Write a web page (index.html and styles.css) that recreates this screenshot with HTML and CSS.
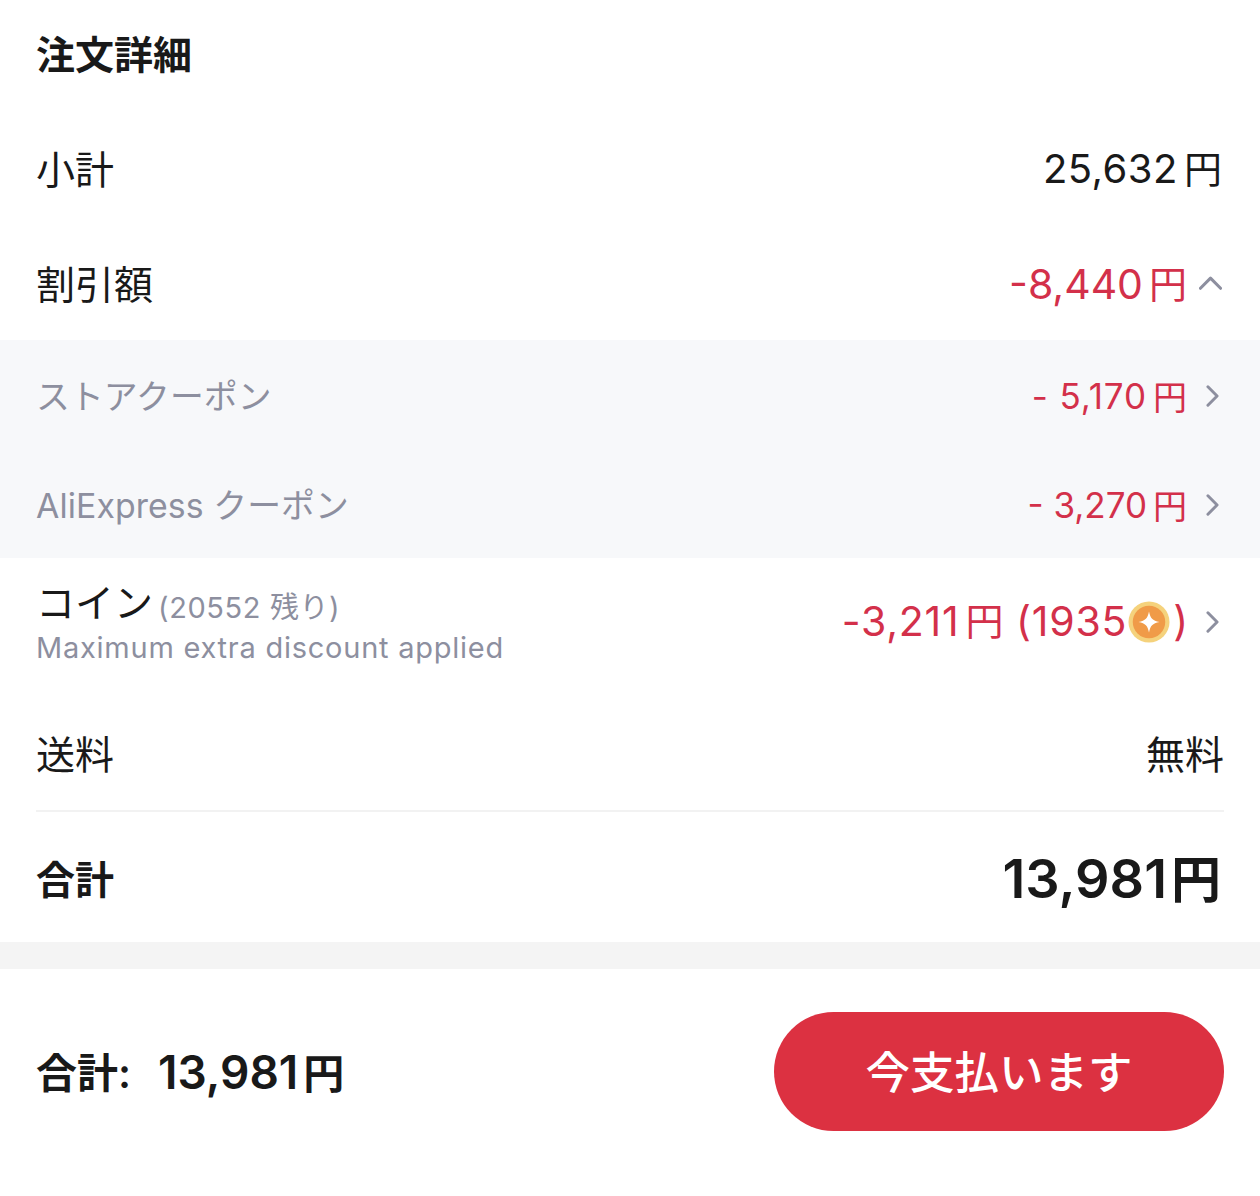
FILE: index.html
```html
<!DOCTYPE html>
<html lang="ja">
<head>
<meta charset="utf-8">
<title>注文詳細</title>
<link rel="stylesheet" href="styles.css">
</head>
<body>
<main class="page">
  <section class="details">
    <h1 class="title">注文詳細</h1>
    <div class="row row-sub"><span>小計</span><span class="amount">25,632<span class="yen">円</span></span></div>
    <div class="row row-disc"><span>割引額</span><span class="end red">-8,440<span class="yen">円</span>
      <svg class="chev up" viewBox="0 0 24 14"><path d="M1.500 12.500 12 2l10.500 10.500"/></svg></span></div>
    <div class="panel">
      <div class="prow"><span>ストアクーポン</span><span class="end pamount pamount-wide">- 5,170<span class="yen">円</span>
        <svg class="chev" viewBox="0 0 14 24"><path d="M2 2l10 10L2 22"/></svg></span></div>
      <div class="prow"><span>AliExpress クーポン</span><span class="end pamount">- 3,270<span class="yen">円</span>
        <svg class="chev" viewBox="0 0 14 24"><path d="M2 2l10 10L2 22"/></svg></span></div>
    </div>
    <div class="row row-coin">
      <div class="coin-left">
        <div class="coin-name">コイン<span class="coin-count">(20552 残り)</span></div>
        <div class="coin-note">Maximum extra discount applied</div>
      </div>
      <span class="end red coin-amount">-3,211<span class="yen">円</span>&nbsp;(1935<svg class="coin" viewBox="0 0 44 44"><circle cx="22" cy="22" r="21.500" fill="#f5d27c"/><circle cx="22" cy="22" r="17" fill="#f09b48"/><path d="M22 11c1.400 7 3.600 9.600 11 11-7.400 1.400-9.600 4-11 11-1.400-7-3.600-9.600-11-11 7.400-1.400 9.600-4 11-11z" fill="#fff"/></svg>)
        <svg class="chev" viewBox="0 0 14 24"><path d="M2 2l10 10L2 22"/></svg></span>
    </div>
    <div class="row row-ship"><span>送料</span><span>無料</span></div>
    <div class="row row-total"><span class="total-label">合計</span><span class="total-value">13,981<span class="yen">円</span></span></div>
  </section>
  <div class="gap"></div>
  <footer class="footer">
    <div class="foot-total"><span class="foot-label">合計:</span><span class="foot-value">13,981<span class="yen">円</span></span></div>
    <button class="pay" type="button">今支払います</button>
  </footer>
</main>
</body>
</html>
```
FILE: styles.css
```css
* { box-sizing: border-box; }
html, body { margin: 0; padding: 0; background: #fff; }
body {
  font-family: Inter, "Noto Sans CJK JP", sans-serif;
  color: #191919;
  width: 1260px;
  height: 1196px;
  overflow: hidden;
}
.page { display: flex; flex-direction: column; height: 1196px; }
.details { height: 942px; display: flex; flex-direction: column; }
.title { margin: 0; height: 112px; padding: 0 36px 4px; display: flex; align-items: center; font-size: 39px; font-weight: 700; line-height: 1; }
.row { display: flex; justify-content: space-between; align-items: center; padding: 0 36px; font-size: 39px; line-height: 47px; }
.row-sub { height: 116px; padding-bottom: 2px; }
.row-disc { height: 112px; padding-top: 1px; }
.row-coin { height: 139px; padding-bottom: 8px; }
.row-ship { height: 113px; padding-top: 1px; }
.row-total { height: 132px; margin: 0 36px; padding: 4px 0 0; border-top: 2px solid #f2f2f2; }
.amount { font-size: 40px; letter-spacing: .5px; padding-right: 2px; }
.yen { margin-left: 6px; font-size: 38px; letter-spacing: 0; }
.red { color: #d3304a; font-size: 41px; }
.end { display: flex; align-items: center; }
.chev { fill: none; stroke: #8d8f9f; stroke-width: 3.200; stroke-linecap: round; stroke-linejoin: round; width: 13px; height: 22px; margin: 0 5px 0 19px; }
.chev.up { width: 23px; height: 14px; margin: -4px 2px 0 12px; }
.panel { background: #f7f8fa; height: 218px; display: flex; flex-direction: column; }
.prow { height: 109px; display: flex; justify-content: space-between; align-items: center; padding: 0 36px; font-size: 33.800px; letter-spacing: .1px; color: #8d8f9f; }
.pamount { font-size: 35px; letter-spacing: 0; color: #d3304a; padding-top: 2px; }
.pamount-wide { letter-spacing: .9px; }
.pamount .yen { font-size: 34px; }
.coin-name { font-size: 39px; line-height: 44px; }
.coin-count { margin-left: 5px; font-size: 29px; color: #8d8f9f; letter-spacing: .6px; vertical-align: -1px; }
.coin-note { font-size: 29px; line-height: 36px; color: #8d8f9f; letter-spacing: .75px; }
.coin-amount { margin-bottom: 4px; letter-spacing: .8px; }
.coin-amount .chev { margin-left: 17px; }
.coin { width: 42px; height: 42px; margin: 0 3px 0 1px; }
.total-label { font-weight: 700; }
.total-value { font-size: 54px; font-weight: 600; padding-right: 3px; }
.total-value .yen { font-size: 50px; margin-left: 4px; }
.gap { height: 27px; background: #f4f4f4; }
.footer { flex: 1; display: flex; justify-content: space-between; align-items: center; padding: 0 36px 23px; }
.foot-total { display: flex; align-items: center; gap: 27px; font-weight: 600; padding-bottom: 2px; }
.foot-label { font-size: 41px; }
.foot-value { font-size: 46px; padding-top: 2px; }
.foot-value .yen { font-size: 41px; margin-left: 5px; }
.pay { width: 450px; height: 119px; padding: 0 0 4px; border: 0; border-radius: 60px; background: #dc3141; color: #fff; font: 500 44.500px Inter, "Noto Sans CJK JP", sans-serif; }
```
